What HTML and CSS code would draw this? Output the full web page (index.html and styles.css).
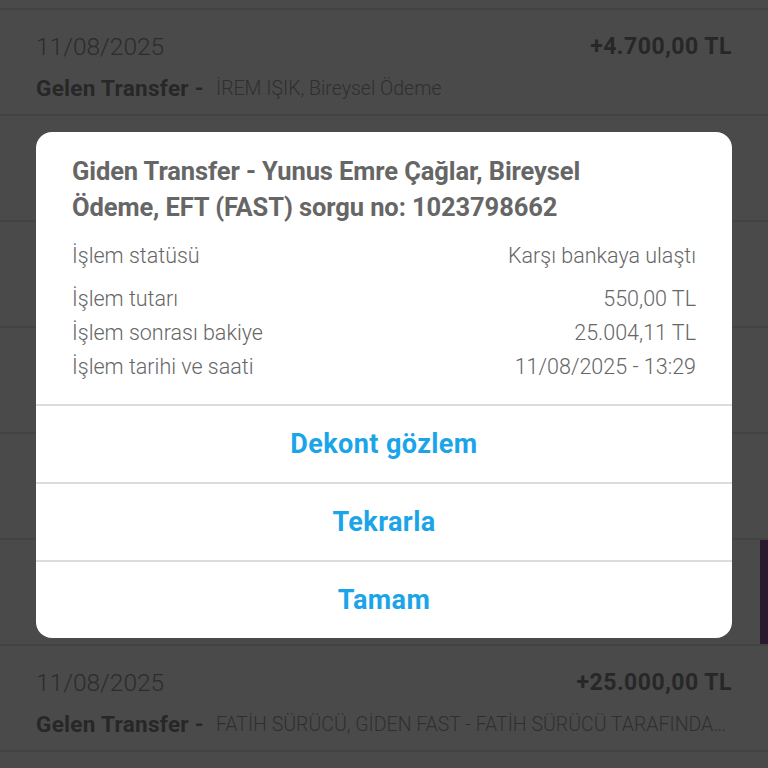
FILE: index.html
```html
<!DOCTYPE html>
<html lang="tr">
<head>
<meta charset="utf-8">
<title>Hesap hareketleri</title>
<link rel="stylesheet" href="styles.css">
</head>
<body>
<div class="screen">
  <div class="list">
    <div class="row">
      <div class="line1"><span class="date">11/08/2025</span><span class="amount">+4.700,00 TL</span></div>
      <div class="line2"><span class="type">Gelen Transfer -</span><span class="desc">İREM IŞIK, Bireysel Ödeme</span></div>
    </div>
    <div class="row"></div>
    <div class="row"></div>
    <div class="row"></div>
    <div class="row"></div>
    <div class="row row-marked"></div>
    <div class="row">
      <div class="line1"><span class="date">11/08/2025</span><span class="amount">+25.000,00 TL</span></div>
      <div class="line2"><span class="type">Gelen Transfer -</span><span class="desc">FATİH SÜRÜCÜ, GİDEN FAST - FATİH SÜRÜCÜ TARAFINDAN GÖNDERİLDİ</span></div>
    </div>
    <div class="row"></div>
  </div>

  <div class="dialog">
    <div class="dialog-body">
      <div class="dialog-title">Giden Transfer - Yunus Emre Çağlar, Bireysel Ödeme, EFT (FAST) sorgu no: 1023798662</div>
      <div class="info info-status"><span>İşlem statüsü</span><span>Karşı bankaya ulaştı</span></div>
      <div class="info"><span>İşlem tutarı</span><span>550,00 TL</span></div>
      <div class="info"><span>İşlem sonrası bakiye</span><span>25.004,11 TL</span></div>
      <div class="info"><span>İşlem tarihi ve saati</span><span>11/08/2025 - 13:29</span></div>
    </div>
    <div class="dialog-btn">Dekont gözlem</div>
    <div class="dialog-btn">Tekrarla</div>
    <div class="dialog-btn">Tamam</div>
  </div>
</div>
</body>
</html>
```
FILE: styles.css
```css
* { box-sizing: border-box; }
html, body {
  margin: 0;
  padding: 0;
  background: #4a4a4a;
}
body {
  font-family: "Roboto", "Liberation Sans", sans-serif;
}
.screen {
  position: relative;
  width: 768px;
  height: 768px;
  overflow: hidden;
  background: #4a4a4a;
}
.list {
  padding-top: 8px;
}
.row {
  position: relative;
  height: 106px;
  border-top: 2px solid #434343;
  padding: 14px 36px 0 36px;
}
.row-marked::after {
  content: "";
  position: absolute;
  right: 0;
  top: 0;
  width: 8px;
  height: 106px;
  background: #2b1b2e;
}
.line1 {
  display: flex;
  justify-content: space-between;
  align-items: center;
  height: 44px;
}
.date {
  font-size: 24.5px;
  color: #2c2c2c;
  font-weight: 300;
}
.amount {
  font-size: 23px;
  font-weight: bold;
  color: #272727;
  letter-spacing: 0.5px;
}
.line2 {
  display: flex;
  align-items: center;
  height: 40px;
  white-space: nowrap;
  overflow: hidden;
}
.type {
  font-size: 22.5px;
  font-weight: bold;
  color: #272727;
  margin-right: 12px;
  letter-spacing: 0.3px;
}
.desc {
  font-size: 19.5px;
  color: #2f2f2f;
  font-weight: 300;
  overflow: hidden;
  text-overflow: ellipsis;
  white-space: nowrap;
}

.dialog {
  position: absolute;
  left: 36px;
  top: 132px;
  width: 696px;
  background: #ffffff;
  border-radius: 16px;
  overflow: hidden;
}
.dialog-body {
  padding: 21px 36px 20px 36px;
}
.dialog-title {
  font-size: 25.5px;
  line-height: 36px;
  font-weight: bold;
  color: #666666;
  margin-bottom: 14px;
  max-width: 560px;
  letter-spacing: -0.1px;
}
.info {
  display: flex;
  justify-content: space-between;
  font-size: 21.5px;
  line-height: 34px;
  color: #666666;
  font-weight: 300;
}
.info-status {
  margin-bottom: 9px;
}
.dialog-btn {
  border-top: 2px solid #dcdcdc;
  height: 78px;
  display: flex;
  align-items: center;
  justify-content: center;
  font-size: 27px;
  font-weight: bold;
  color: #1ba5e8;
  letter-spacing: 0.4px;
}
```
